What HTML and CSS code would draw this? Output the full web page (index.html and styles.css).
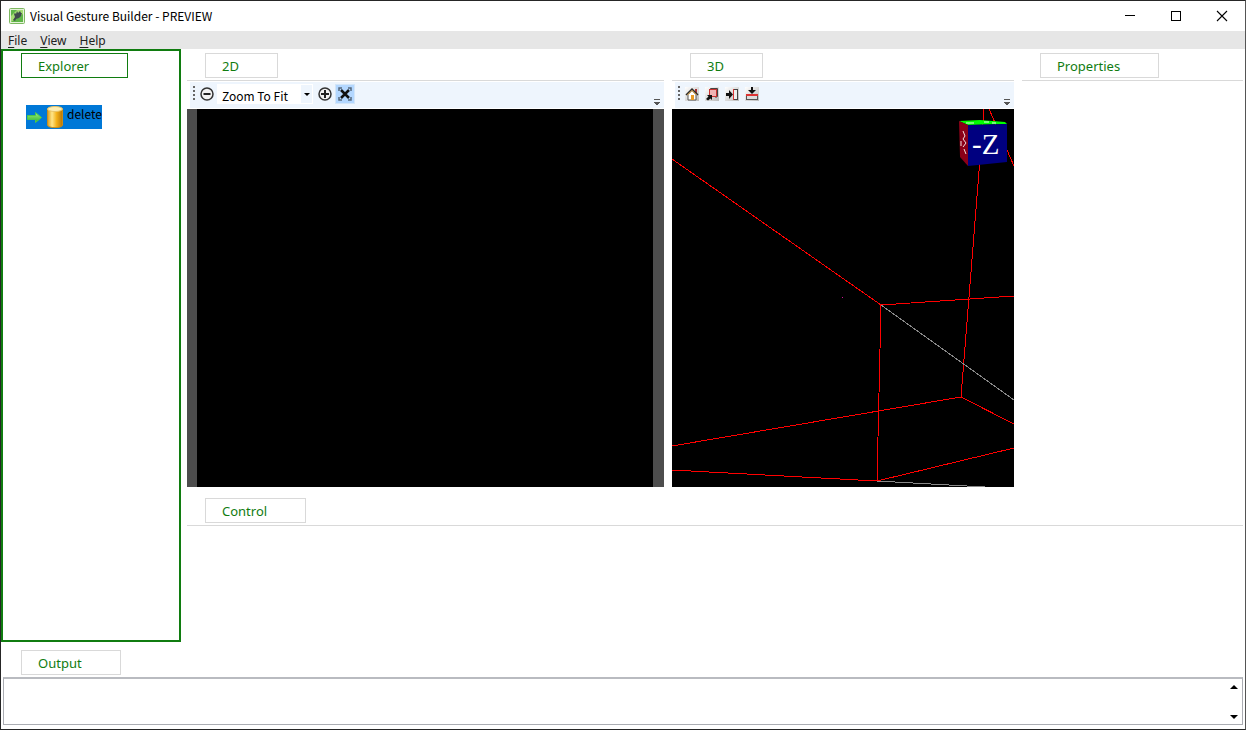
FILE: index.html
```html
<!DOCTYPE html>
<html lang="en">
<head>
    <meta charset="UTF-8">
    <meta name="viewport" content="width=device-width, initial-scale=1.0">
    <title>Visual Gesture Builder - PREVIEW</title>
    <link rel="stylesheet" href="styles.css">
</head>
<body>
    <div class="window">
        <header class="titlebar">
            <svg class="app-icon" width="16" height="16" viewBox="0 0 16 16">
                <rect x="0.5" y="0.5" width="15" height="15" rx="1" fill="#e4f2d8" stroke="#7db860"/>
                <rect x="2" y="2" width="12" height="12" fill="#5fb548"/>
                <path d="M2 14V8l6-6h6v4z" fill="#a5dc74"/>
                <path d="M4 12l2-3-1-3 1-1 1 1 1-3 1 2 2-2 1 2 1 0-1 3-2 2-3 1-1 2z" fill="#3f4a4c"/>
            </svg>
            <span class="title">Visual Gesture Builder - PREVIEW</span>
            <div class="window-buttons">
                <button type="button" aria-label="Minimize">
                    <svg width="12" height="12" viewBox="0 0 12 12"><path d="M1 5.5h10" stroke="#000"/></svg>
                </button>
                <button type="button" aria-label="Maximize">
                    <svg width="12" height="12" viewBox="0 0 12 12"><rect x="1.5" y="1.5" width="9" height="9" fill="none" stroke="#000"/></svg>
                </button>
                <button type="button" aria-label="Close">
                    <svg width="12" height="12" viewBox="0 0 12 12"><path d="M1 1l10 10M11 1L1 11" stroke="#000" stroke-width="1.1"/></svg>
                </button>
            </div>
        </header>

        <nav class="menubar">
            <button type="button"><u>F</u>ile</button>
            <button type="button"><u>V</u>iew</button>
            <button type="button"><u>H</u>elp</button>
        </nav>

        <main class="workspace">
            <section class="explorer">
                <h2 class="tab tab-active">Explorer</h2>
                <button type="button" class="tree-item">
                    <svg width="40" height="24" viewBox="0 0 40 24">
                        <defs>
                            <linearGradient id="gold" x1="0" x2="1" y1="0" y2="0">
                                <stop offset="0" stop-color="#d99a18"/>
                                <stop offset="0.3" stop-color="#ffe68a"/>
                                <stop offset="0.6" stop-color="#f3b21c"/>
                                <stop offset="1" stop-color="#b87406"/>
                            </linearGradient>
                            <linearGradient id="leaf" x1="0" x2="0" y1="0" y2="1">
                                <stop offset="0" stop-color="#9cf07c"/>
                                <stop offset="1" stop-color="#2fb52b"/>
                            </linearGradient>
                        </defs>
                        <path d="M1.5 10.5h8V7.5l6 5-6 5v-3h-8z" fill="url(#leaf)" stroke="#4cc84a"/>
                        <path d="M21.5 4v16c0 3.5 15 3.5 15 0V4z" fill="url(#gold)" stroke="#c88d1c"/>
                        <ellipse cx="29" cy="4" rx="7.5" ry="2.5" fill="#fdeeb4" stroke="#e9c468"/>
                    </svg>
                    <span>delete</span>
                </button>
            </section>

            <div class="documents">
                <div class="views">
                    <section class="panel view-2d">
                        <h2 class="tab">2D</h2>
                        <div class="toolbar">
                            <span class="grip"></span>
                            <button type="button" class="tool" aria-label="Zoom out">
                                <svg width="16" height="16" viewBox="0 0 16 16"><circle cx="8" cy="8" r="6" fill="#f2f2f2" stroke="#333" stroke-width="1.5"/><path d="M4.5 8h7" stroke="#222" stroke-width="2"/></svg>
                            </button>
                            <div class="zoom-box">
                                <select aria-label="Zoom level">
                                    <option>Zoom To Fit</option>
                                </select>
                                <span class="zoom-arrow"></span>
                            </div>
                            <button type="button" class="tool" aria-label="Zoom in">
                                <svg width="16" height="16" viewBox="0 0 16 16"><circle cx="8" cy="8" r="6" fill="#f2f2f2" stroke="#333" stroke-width="1.5"/><path d="M4 8h8M8 4v8" stroke="#222" stroke-width="2"/></svg>
                            </button>
                            <button type="button" class="tool tool-on" aria-label="Fit to window">
                                <svg width="16" height="16" viewBox="0 0 16 16">
                                    <path d="M2 5V2h3M11 2h3v3M14 11v3h-3M5 14H2v-3" fill="none" stroke="#55687c" stroke-width="1.5"/>
                                    <path d="M4 4l8 8M12 4l-8 8" stroke="#111" stroke-width="2.5"/>
                                </svg>
                            </button>
                            <span class="overflow"></span>
                        </div>
                        <div class="canvas-2d"></div>
                    </section>

                    <section class="panel view-3d">
                        <h2 class="tab">3D</h2>
                        <div class="toolbar">
                            <span class="grip"></span>
                            <button type="button" class="tool tool-3d" aria-label="Home view">
                                <svg width="14" height="14" viewBox="0 0 14 14">
                                    <path d="M10 2h2v4h-2z" fill="#a33"/>
                                    <path d="M3 7.5L7 3.5l4 4V13H3z" fill="#fff" stroke="#555"/>
                                    <path d="M1 8l6-6 6 6" fill="none" stroke="#2c2c2c" stroke-width="1.5"/>
                                    <path d="M2.5 8L7 3.5 11.5 8" fill="none" stroke="#e8a63a"/>
                                    <rect x="6" y="8" width="3" height="5" fill="#e79a26"/>
                                </svg>
                            </button>
                            <button type="button" class="tool tool-3d" aria-label="Front view">
                                <svg width="14" height="14" viewBox="0 0 14 14">
                                    <path d="M4.5 3.5l1-2h7v8l-2 1" fill="#e6c4c4" stroke="#444"/>
                                    <rect x="4.5" y="2.5" width="7" height="7" fill="#f0b4b4" stroke="#c83232"/>
                                    <path d="M2 8h5v5L5.5 11.5 3 13.5 1 12l2.5-2.5z" fill="#111"/>
                                </svg>
                            </button>
                            <button type="button" class="tool tool-3d" aria-label="Side view">
                                <svg width="14" height="14" viewBox="0 0 14 14">
                                    <path d="M1 6h3V3l4 4.5L4 12V9H1z" fill="#111"/>
                                    <rect x="8.5" y="2.5" width="4" height="10" fill="#eee" stroke="#444"/>
                                    <path d="M8.5 2v11" stroke="#d33"/>
                                </svg>
                            </button>
                            <button type="button" class="tool tool-3d" aria-label="Top view">
                                <svg width="14" height="14" viewBox="0 0 14 14">
                                    <path d="M6 0h2v3h3L7 7 3 3h3z" fill="#111"/>
                                    <rect x="1.5" y="8.5" width="11" height="4" fill="#ddd" stroke="#555"/>
                                    <path d="M1 8h12" stroke="#d33" stroke-width="2"/>
                                </svg>
                            </button>
                            <span class="overflow"></span>
                        </div>
                        <div class="canvas-3d">
                            <svg viewBox="0 0 342 378" preserveAspectRatio="xMinYMin slice">
                                <!-- room frustum -->
                                <g class="wire wire-red">
                                    <path d="M0 50L209 196L342 187"/>
                                    <path d="M209 196L205 372"/>
                                    <path d="M0 361L205 372L342 339"/>
                                    <path d="M0 337L289 288L342 315"/>
                                    <path d="M289 288L312 0"/>
                                    <path d="M317 0L342 57"/>
                                </g>
                                <g class="wire wire-gray">
                                    <path d="M209 196L342 291"/>
                                    <path d="M205 372L313 378"/>
                                </g>
                                <rect x="170" y="188" width="1" height="1" fill="#d0109a"/>
                                <!-- orientation cube -->
                                <path d="M287 12L308 11L333 13L335 15L296 16z" fill="#00ff00"/>
                                <path d="M294 14h8M312 13h5M320 14h4" stroke="#e4ffe4"/>
                                <path d="M287 12L296 16V57L288 48z" fill="#8b0018"/>
                                <path d="M291 22l2 5-2 3 3 4-3 4M289 32v5M292 40l2 5" fill="none" stroke="#f3dede"/>
                                <path d="M296 16L335 15V53L296 57z" fill="#000080"/>
                                <text class="cube-label" x="300" y="45">-Z</text>
                            </svg>
                        </div>
                    </section>

                    <section class="panel properties">
                        <h2 class="tab">Properties</h2>
                        <div class="panel-body"></div>
                    </section>
                </div>

                <section class="panel control">
                    <h2 class="tab">Control</h2>
                    <div class="panel-body"></div>
                </section>
            </div>
        </main>

        <section class="output">
            <h2 class="tab">Output</h2>
            <div class="output-box">
                <textarea aria-label="Output" readonly></textarea>
                <div class="scroll-buttons">
                    <button type="button" aria-label="Scroll up"><svg width="8" height="4" viewBox="0 0 8 4"><path d="M0 4l4-4 4 4z"/></svg></button>
                    <button type="button" aria-label="Scroll down"><svg width="8" height="4" viewBox="0 0 8 4"><path d="M0 0l4 4 4-4z"/></svg></button>
                </div>
            </div>
        </section>
    </div>
</body>
</html>
```

FILE: styles.css
```css
* {
    box-sizing: border-box;
}

body {
    margin: 0;
    font-family: "Noto Sans CJK KR", "Noto Sans", sans-serif;
    font-size: 12px;
    color: #000;
    background: #fff;
}

button {
    margin: 0;
    padding: 0;
    border: none;
    background: none;
    font: inherit;
    color: inherit;
}

svg {
    display: block;
}

.window {
    display: flex;
    flex-direction: column;
    height: 100vh;
    border: 1px solid #262626;
    border-right-color: #555;
}

/* title bar and menu */
.titlebar {
    display: flex;
    align-items: center;
    height: 30px;
    padding-left: 8px;
}

.title {
    margin-left: 5px;
    line-height: 16px;
}

.window-buttons {
    display: flex;
    margin-left: auto;
}

.window-buttons button {
    display: flex;
    align-items: center;
    justify-content: center;
    width: 46px;
    height: 30px;
}

.menubar {
    display: flex;
    gap: 13px;
    height: 18px;
    padding-left: 7px;
    background: #e6e6e6;
    color: #222;
    font-family: "Noto Sans", sans-serif;
    line-height: 20px;
}

.menubar u {
    text-underline-offset: 2px;
}

/* docked panels */
.workspace {
    display: flex;
    flex: 1;
    gap: 6px;
    min-height: 0;
    padding-right: 2px;
}

.tab {
    width: max-content;
    height: 25px;
    margin: 4px 0 2px 18px;
    padding: 0 38px 0 16px;
    border: 1px solid #d9d9d9;
    color: #107c10;
    font-family: "Noto Sans", sans-serif;
    font-size: 13px;
    font-weight: normal;
    line-height: 24px;
}

.tab-active {
    margin-top: 2px;
    border-color: #107c10;
}

.explorer {
    width: 180px;
    border: 2px solid #107c10;
}

.tree-item {
    display: flex;
    height: 24px;
    margin: 27px 0 0 23px;
    background: #0078d7;
    line-height: 18px;
}

.tree-item span {
    margin-left: 1px;
}

.documents {
    display: flex;
    flex: 1;
    flex-direction: column;
    gap: 7px;
    min-width: 0;
}

.views {
    display: flex;
    flex: 438;
    gap: 8px;
    min-height: 0;
}

.panel {
    display: flex;
    flex-direction: column;
    min-width: 0;
    min-height: 0;
}

.panel-body {
    flex: 1;
    border-top: 1px solid #d9d9d9;
}

.view-2d {
    flex: 477;
}

.view-3d {
    flex: 342;
}

.properties {
    flex: 221;
}

.control {
    flex: 148;
}

/* toolbars */
.toolbar {
    display: flex;
    height: 29px;
    padding: 3px 4px 0 5px;
    border-top: 1px solid #d9d9d9;
    border-bottom: 1px solid #fff;
    background: linear-gradient(#eef5fd, #eef5fd) 3px 1px no-repeat;
}

.grip {
    width: 3px;
    height: 15px;
    margin: 2px 2px 0 0;
    background: repeating-linear-gradient(#666 0 2px, transparent 2px 4px) 1px 0 / 2px 100% no-repeat;
}

.tool {
    display: flex;
    align-items: center;
    justify-content: center;
    width: 20px;
    height: 20px;
}

.tool-on {
    border: 1px solid #d4e6f8;
    background: #b3d7ff;
}

.tool-3d svg {
    background: linear-gradient(135deg, #fff, #bbb);
}

.zoom-box {
    position: relative;
    width: 96px;
    height: 20px;
    margin-right: 2px;
}

.zoom-box select {
    width: 100%;
    height: 20px;
    padding: 3px 0 0 4px;
    border: 1px solid #fff;
    appearance: none;
    background: linear-gradient(#eef5fd, #eef5fd) right / 11px 100% no-repeat #fff;
    color: #000;
    font-family: inherit;
    font-size: 12px;
    line-height: 16px;
}

.zoom-arrow {
    position: absolute;
    top: 9px;
    right: 3px;
    border: 3px solid transparent;
    border-top-color: #000;
    border-bottom: none;
    pointer-events: none;
}

.overflow {
    width: 6px;
    height: 6px;
    margin: 15px 0 0 auto;
    border-top: 1px solid #555;
    background: linear-gradient(#555, #555) 50% 2px / 6px 1px no-repeat,
                linear-gradient(#555, #555) 50% 3px / 4px 1px no-repeat,
                linear-gradient(#555, #555) 50% 4px / 2px 1px no-repeat;
}

/* canvases */
.canvas-2d {
    flex: 1;
    border: solid #4d4d4d;
    border-width: 0 11px 0 10px;
    background: #000;
}

.canvas-3d {
    flex: 1;
    min-height: 0;
    overflow: hidden;
    background: #000;
}

.canvas-3d svg {
    width: 100%;
    height: 100%;
}

.wire {
    fill: none;
    stroke-width: 1;
    shape-rendering: crispEdges;
}

.wire-red {
    stroke: #f00;
}

.wire-gray {
    stroke: #888;
}

.cube-label {
    fill: #fff;
    font-family: "Liberation Serif", serif;
    font-size: 29px;
}

/* output */
.output {
    padding: 4px 2px;
}

.output-box {
    display: flex;
    height: 48px;
    border: 1px solid #abadb3;
    border-top: 2px solid #b9bbc0;
}

.output-box textarea {
    flex: 1;
    padding: 2px;
    border: none;
    outline: none;
    resize: none;
    background: #fff;
    font-family: inherit;
    font-size: 12px;
}

.scroll-buttons {
    display: flex;
    flex-direction: column;
    justify-content: space-between;
    width: 17px;
}

.scroll-buttons button {
    display: flex;
    align-items: center;
    justify-content: center;
    height: 15px;
}
```
